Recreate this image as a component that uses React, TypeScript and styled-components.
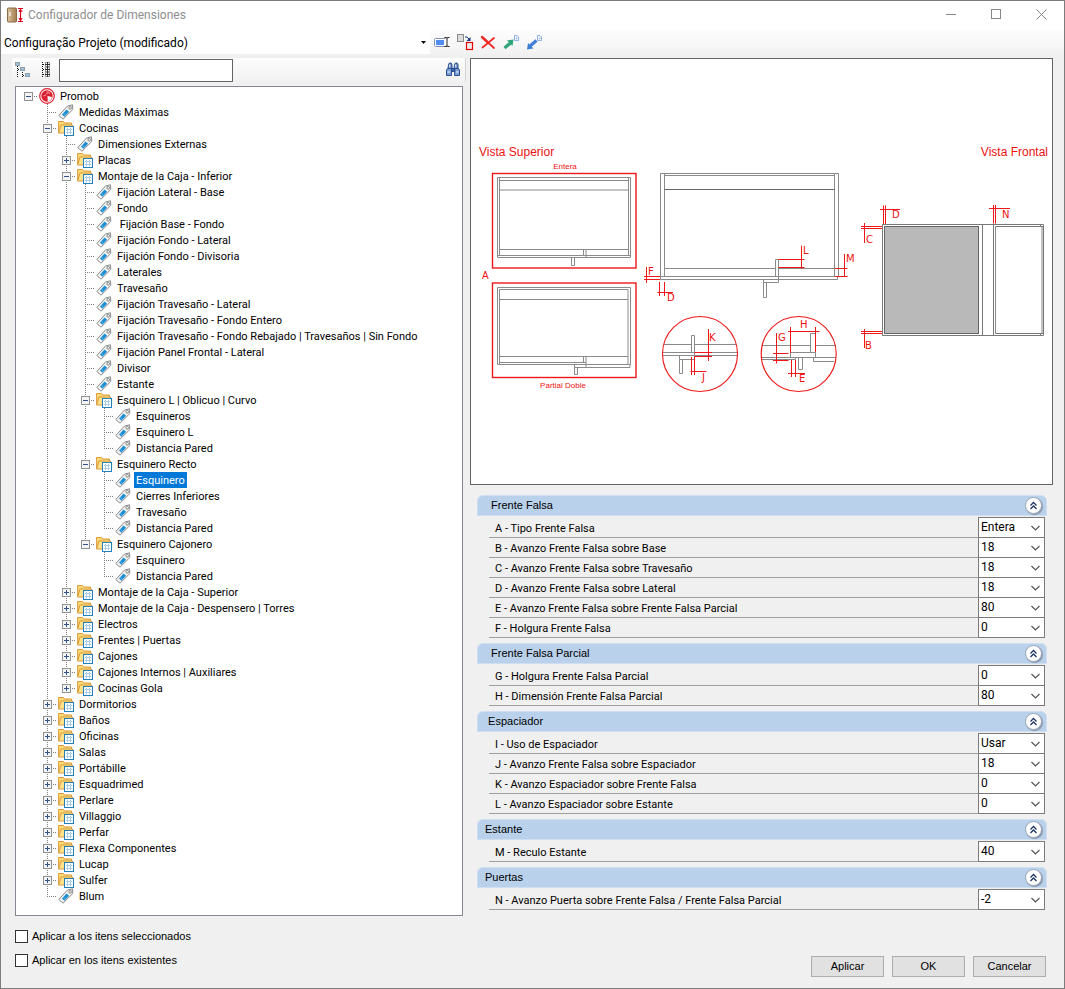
import React, { useState } from 'react';
import styled, { createGlobalStyle } from 'styled-components';

const GlobalStyle = createGlobalStyle`
  * { box-sizing: border-box; }
  body {
    margin: 0;
    background: #f0f0f0;
    color: #000;
    font-family: "Liberation Sans", Arial, sans-serif;
    font-size: 11px;
  }
  button, input, select { font: inherit; color: inherit; }
`;

const compactFont = 'Roboto, "Liberation Sans", Arial, sans-serif';

const Window = styled.main`
  display: flex;
  flex-direction: column;
  min-height: 100vh;
  border: 1px solid #7c7c7c;
  background: #f0f0f0;
`;

const TitleBar = styled.header`
  display: flex;
  align-items: center;
  height: 29px;
  padding: 0 0 2px 5px;
  background: #fff;
`;

const Title = styled.h1`
  flex: 1;
  margin: 0 0 0 4px;
  font-family: ${compactFont};
  font-size: 12px;
  font-weight: 400;
  line-height: 16px;
  color: #8e8e8e;
`;

const CaptionButton = styled.button`
  display: flex;
  align-items: center;
  justify-content: center;
  width: 45px;
  height: 27px;
  padding: 0;
  border: 0;
  background: transparent;
`;

const ProjectBar = styled.div`
  display: flex;
  height: 24px;
  background: linear-gradient(#fdfdfd, #f2f2f2);
`;

const ProjectPicker = styled.div`
  display: grid;
  width: 429px;
  background: #fff;
`;

const ProjectSelect = styled.select`
  grid-area: 1 / 1;
  appearance: none;
  padding: 2px 16px 0 3px;
  border: 0;
  background: transparent;
  font-family: ${compactFont};
  font-size: 12px;
`;

const ProjectArrow = styled.svg`
  grid-area: 1 / 1;
  place-self: center end;
  margin-right: 4px;
  pointer-events: none;
`;

const ToolGroup = styled.div`
  display: flex;
  align-items: center;
  gap: 5px;
  padding-left: 3px;
`;

const ToolButton = styled.button`
  display: flex;
  align-items: center;
  justify-content: center;
  width: 18px;
  height: 18px;
  padding: 0;
  border: 0;
  background: transparent;
`;

const Body = styled.div`
  display: flex;
  flex: 1;
  gap: 4px;
  padding: 4px 11px 11px;
`;

const LeftColumn = styled.section`
  display: flex;
  flex-direction: column;
  flex: 0 0 454px;
`;

const RightColumn = styled.section`
  display: flex;
  flex-direction: column;
  flex: 1;
  min-width: 0;
`;

const SearchBar = styled.div`
  display: flex;
  align-items: center;
  gap: 5px;
  height: 24px;
  padding: 0 3px 0 1px;
  border-right: 1px solid #d4d4d4;
  border-radius: 2px;
  background: linear-gradient(#fdfdfd, #f1f1f1);
`;

const SearchInput = styled.input`
  width: 174px;
  height: 23px;
  margin-right: auto;
  padding: 0 4px;
  border: 1px solid #646464;
  background: #fff;
`;

const TreePanel = styled.nav`
  flex: 1;
  margin: 4px 3px 0;
  padding: 1px 0 10px 3px;
  border: 1px solid #828790;
  background: #fff;
`;

const Branch = styled.ul<{ $nested?: boolean }>`
  margin: 0;
  padding: 0 0 0 ${p => (p.$nested ? 19 : 0)}px;
  list-style: none;
`;

const Node = styled.li<{ $guide: 'none' | 'half' | 'full' }>`
  background-image: ${p =>
    p.$guide === 'none' ? 'none' : 'repeating-linear-gradient(#808080 0 1px, transparent 1px 2px)'};
  background-repeat: no-repeat;
  background-size: 1px ${p => (p.$guide === 'half' ? '8px' : '100%')};
  background-position: 9px 0;
`;

const NodeRow = styled.div`
  display: flex;
  align-items: center;
  height: 16px;
`;

const Joint = styled.div`
  display: flex;
  align-items: center;
  width: 20px;
  height: 16px;
  padding-left: 5px;
  background: repeating-linear-gradient(90deg, #808080 0 1px, transparent 1px 2px) 9px 8px / 10px 1px no-repeat;
`;

const Expander = styled.button`
  display: flex;
  width: 9px;
  height: 9px;
  padding: 0;
  border: 0;
  background: #fff;
`;

const NodeLabel = styled.span<{ $selected?: boolean }>`
  margin-left: 3px;
  padding: 2px 2px 0;
  font-family: ${compactFont};
  line-height: 14px;
  white-space: pre;
  color: ${p => (p.$selected ? '#fff' : '#000')};
  background: ${p => (p.$selected ? '#0078d7' : 'transparent')};
`;

const Options = styled.div`
  display: flex;
  flex-direction: column;
  gap: 8px;
  padding: 12px 3px 9px;
`;

const CheckLabel = styled.label`
  display: flex;
  align-items: center;
  gap: 4px;
  height: 16px;
`;

const CheckBox = styled.input`
  appearance: none;
  width: 13px;
  height: 13px;
  margin: 0;
  border: 1px solid #333;
  background: #fff;
  &:checked { background: #0078d7; box-shadow: inset 0 0 0 2px #fff; }
`;

const Preview = styled.figure`
  margin: 0;
  border: 1px solid #646464;
  background: #fff;
`;

const Drawing = styled.svg`
  display: block;
  width: 100%;
  height: auto;
`;

const Sections = styled.div`
  display: flex;
  flex-direction: column;
  gap: 6px;
  padding: 10px 6px 0 7px;
`;

const SectionHeader = styled.header`
  display: flex;
  align-items: center;
  justify-content: space-between;
  height: 21px;
  margin-bottom: 1px;
  padding: 0 4px 0 7px;
  border: 1px solid #cfdff1;
  border-radius: 6px 6px 0 0;
  background: #b9d1ea;
`;

const SectionTitle = styled.h2`
  margin: 0;
  padding-bottom: 2px;
  font-size: 11px;
  font-weight: 400;
  line-height: 16px;
  white-space: pre;
`;

const CollapseButton = styled.button`
  display: flex;
  align-items: center;
  justify-content: center;
  width: 17px;
  height: 17px;
  padding: 0;
  border: 1px solid #9aa5b8;
  border-radius: 50%;
  background: #fff;
  box-shadow: 1px 1px 1px #8593aa;
`;

const PropertyRow = styled.div`
  display: flex;
  height: 20px;
  margin: 0 2px 0 12px;
`;

const PropertyLabel = styled.label`
  flex: 1;
  height: 21px;
  padding: 3px 0 0 6px;
  border-bottom: 1px solid #a0a0a0;
  font-family: ${compactFont};
  line-height: 17px;
`;

const ValuePicker = styled.div`
  display: grid;
  width: 67px;
  height: 21px;
`;

const ValueSelect = styled.select`
  grid-area: 1 / 1;
  appearance: none;
  min-width: 0;
  padding: 0 18px 2px 2px;
  border: 1px solid #7a7a7a;
  border-radius: 0;
  background: #fff;
  font-family: ${compactFont};
  font-size: 12px;
`;

const ValueArrow = styled.svg`
  grid-area: 1 / 1;
  place-self: center end;
  margin-right: 5px;
  pointer-events: none;
`;

const Footer = styled.footer`
  display: flex;
  justify-content: flex-end;
  gap: 8px;
  margin-top: auto;
  padding: 16px 7px 0 0;
`;

const PushButton = styled.button`
  width: 73px;
  height: 21px;
  padding: 0 0 2px;
  border: 1px solid #adadad;
  background: #e1e1e1;
`;

const DoorIcon = () => (
  <svg width="18" height="18" viewBox="0 0 18 18" aria-hidden="true">
    <defs>
      <linearGradient id="wood" x1="0" y1="0" x2="1" y2="0">
        <stop offset="0" stopColor="#dcc3a0" />
        <stop offset="1" stopColor="#a57b4d" />
      </linearGradient>
    </defs>
    <rect x="1.5" y="2" width="9" height="14" rx="1" fill="url(#wood)" stroke="#8c6a45" />
    <path d="M4 6v4" stroke="#f2f2f2" strokeWidth="1.4" />
    <path d="M12 2.5h5M12 15.5h5M14.5 4v10" stroke="#d9001b" strokeWidth="1.2" />
    <path d="M14.5 2.5l2.2 3.2h-4.4zM14.5 15.5l2.2-3.2h-4.4z" fill="#d9001b" />
  </svg>
);

const RenameIcon = () => (
  <svg width="18" height="18" viewBox="0 0 18 18" aria-hidden="true">
    <rect x="1.5" y="5.5" width="12" height="8" rx="1" fill="#fff" stroke="#7e93b5" />
    <rect x="3" y="7" width="8" height="5" fill="#4f8df0" />
    <path d="M14 5v8" stroke="#fff" strokeWidth="3" />
    <path d="M11.5 4.5h1.5l1 .5 1-.5h1.5M11.5 13.5h1.5l1-.5 1 .5h1.5M14 5v8" fill="none" stroke="#222" />
  </svg>
);

const ReplaceIcon = () => (
  <svg width="18" height="18" viewBox="0 0 18 18" aria-hidden="true">
    <rect x="1.5" y="1.5" width="6" height="7" fill="#ddd" stroke="#8a8a8a" />
    <rect x="10.5" y="9.5" width="6" height="7" fill="#eee" stroke="#e60000" strokeWidth="1.2" />
    <path d="M9 4h2l2 2" fill="none" stroke="#16377f" />
    <path d="M14.5 4v4h-4z" fill="#16377f" />
  </svg>
);

const DeleteIcon = () => (
  <svg width="18" height="18" viewBox="0 0 18 18" aria-hidden="true">
    <path d="M3 4l12 11M15 5L3.5 14.5" stroke="#ee2b2b" strokeWidth="1.8" strokeLinecap="round" />
    <path d="M3 4l6 5.5" stroke="#ee2b2b" strokeWidth="2.4" strokeLinecap="round" />
  </svg>
);

const SheetMark = () => (
  <path d="M12.5 2.5h2.5l1.5 1.5v3.5h-4zM14 5.5h1.5" fill="#edf4fd" stroke="#8fb2e2" />
);

const ExportIcon = () => (
  <svg width="18" height="18" viewBox="0 0 18 18" aria-hidden="true">
    <path d="M2.5 15L9 9.5" stroke="#30a57c" strokeWidth="3.2" />
    <path d="M5 7.5l6.5-1-1 6.5z" fill="#30a57c" />
    <SheetMark />
  </svg>
);

const ImportIcon = () => (
  <svg width="18" height="18" viewBox="0 0 18 18" aria-hidden="true">
    <path d="M5 13L11.5 7.5" stroke="#3d7fd6" strokeWidth="3.2" />
    <path d="M2 16.5l1-6.5 5.5 5.5z" fill="#3d7fd6" />
    <SheetMark />
  </svg>
);

const CollapseTreeIcon = () => (
  <svg width="18" height="18" viewBox="0 0 18 18" aria-hidden="true">
    <path d="M4.5 5v12M5 8.5h3M9.5 11v6M10 14.5h4" fill="none" stroke="#111" strokeDasharray="1 1" />
    <g fill="#fff" stroke="#8b9fae">
      <rect x="2.5" y="1.5" width="4" height="3" />
      <rect x="7.5" y="6.5" width="4" height="3" />
      <rect x="12.5" y="12.5" width="4" height="3" />
    </g>
    <path d="M3 3h3M8 8h3M13 14h3" stroke="#4a7fa5" />
  </svg>
);

const ExpandTreeIcon = () => (
  <svg width="18" height="18" viewBox="0 0 18 18" aria-hidden="true">
    <path d="M6.5 1v16M7 3.5h3M7 8.5h3M7 13.5h3" fill="none" stroke="#111" strokeDasharray="1 1" />
    <g fill="#fff" stroke="#9a9a9a">
      <rect x="9.5" y="1.5" width="4" height="4" />
      <rect x="9.5" y="6.5" width="4" height="4" />
      <rect x="9.5" y="11.5" width="4" height="4" />
    </g>
    <path d="M9 3.5h5M9 8.5h5M9 13.5h5M11.5 1v15" stroke="#333" />
  </svg>
);

const BinocularsIcon = () => (
  <svg width="18" height="18" viewBox="0 0 18 18" aria-hidden="true">
    <g stroke="#2b4f8c">
      <path d="M4.5 3.5l1-1.5h1.5l1 1.5v4.5h-4zM10.5 3.5l1-1.5h1.5l1 1.5v4.5h-4z" fill="#5577b5" />
      <path d="M2.5 9l1-1.5h4v7h-5zM11 7.5h3.5l1 1.5v5.5h-5z" fill="#7da0d6" />
      <path d="M7.5 7.5h3v3h-3z" fill="#3a62a8" />
    </g>
    <path d="M3.5 11h2.500M12 11h2.500M5.800 3.500v3M11.800 3.500v3" stroke="#eef4fc" strokeWidth="1.2" />
  </svg>
);

const BrandIcon = () => (
  <svg width="16" height="16" viewBox="0 0 16 16" aria-hidden="true">
    <circle cx="8" cy="8" r="7.3" fill="#fff" stroke="#dc1f2e" strokeWidth="1.2" />
    <circle cx="8" cy="8" r="5.7" fill="#dc1f2e" />
    <path d="M8.5 8L13 9c-.6 2.600-2 4-4.200 4.500z" fill="#fff" />
    <path d="M9.5 3.5l1 2.5M4.5 8l2.5-1M8.3 3.500l-.5 3" stroke="#fff" strokeWidth=".6" />
  </svg>
);

const TagIcon = () => (
  <svg width="16" height="16" viewBox="0 0 16 16" aria-hidden="true">
    <path d="M.8 11.500L9.500 2l5-1.200.3 4.700L5 15.200z" fill="#f0f0f0" stroke="#8b8b8b" strokeLinejoin="round" />
    <path d="M4 10.500l4.600-5 2.500 2.300-4.700 5z" fill="#1c8fd4" />
    <path d="M5.500 9.500l2 1.800" stroke="#7cc4ec" strokeWidth=".8" />
    <circle cx="12.200" cy="3.800" r="1.300" fill="#fff" stroke="#777" strokeWidth=".9" />
  </svg>
);

const FolderIcon = () => (
  <svg width="16" height="16" viewBox="0 0 16 16" aria-hidden="true">
    <path d="M.6 13V1.500h4.800L6.500 3h7v3" fill="#fbd873" stroke="#d99a3c" strokeLinejoin="round" />
    <path d="M.6 13L3 5h11.500v8z" fill="#fde08a" stroke="#d99a3c" strokeLinejoin="round" />
    <rect x="6.500" y="6.500" width="9" height="9" fill="#fff" stroke="#1f7fb8" />
    <path d="M9.500 8v6M12.500 8v6M8 9.500h6M8 12.500h6" stroke="#a9cdea" />
  </svg>
);

const ExpanderMark = ({ open }: { open: boolean }) => (
  <svg width="9" height="9" viewBox="0 0 9 9" aria-hidden="true">
    <rect x=".5" y=".5" width="8" height="8" fill="#f4f4f4" stroke="#919191" />
    <path d={open ? 'M2 4.500h5' : 'M2 4.500h5M4.500 2v5'} stroke="#31528f" />
  </svg>
);

type TreeNode = { name: string; open?: boolean; folder?: boolean; brand?: boolean; selected?: boolean; children?: TreeNode[] };

const tags = (...names: string[]): TreeNode[] => names.map(name => ({ name }));
const folders = (...names: string[]): TreeNode[] => names.map(name => ({ name, folder: true }));

const tree: TreeNode[] = [
  {
    name: 'Promob', brand: true, open: true,
    children: [
      { name: 'Medidas Máximas' },
      {
        name: 'Cocinas', folder: true, open: true,
        children: [
          { name: 'Dimensiones Externas' },
          { name: 'Placas', folder: true },
          {
            name: 'Montaje de la Caja - Inferior', folder: true, open: true,
            children: [
              ...tags(
                'Fijación Lateral - Base', 'Fondo', ' Fijación Base - Fondo', 'Fijación Fondo - Lateral',
                'Fijación Fondo - Divisoria', 'Laterales', 'Travesaño', 'Fijación Travesaño - Lateral',
                'Fijación Travesaño - Fondo Entero',
                'Fijación Travesaño - Fondo Rebajado | Travesaños | Sin Fondo',
                'Fijación Panel Frontal - Lateral', 'Divisor', 'Estante',
              ),
              { name: 'Esquinero L | Oblicuo | Curvo', folder: true, open: true, children: tags('Esquineros', 'Esquinero L', 'Distancia Pared') },
              {
                name: 'Esquinero Recto', folder: true, open: true,
                children: [{ name: 'Esquinero', selected: true }, ...tags('Cierres Inferiores', 'Travesaño', 'Distancia Pared')],
              },
              { name: 'Esquinero Cajonero', folder: true, open: true, children: tags('Esquinero', 'Distancia Pared') },
            ],
          },
          ...folders(
            'Montaje de la Caja - Superior', 'Montaje de la Caja - Despensero | Torres', 'Electros',
            'Frentes | Puertas', 'Cajones', 'Cajones Internos | Auxiliares', 'Cocinas Gola',
          ),
        ],
      },
      ...folders(
        'Dormitorios', 'Baños', 'Oficinas', 'Salas', 'Portábille', 'Esquadrimed', 'Perlare',
        'Villaggio', 'Perfar', 'Flexa Componentes', 'Lucap', 'Sulfer',
      ),
      { name: 'Blum' },
    ],
  },
];

function TreeItem({ node, last, root }: { node: TreeNode; last: boolean; root?: boolean }) {
  const [open, setOpen] = useState(!!node.open);
  const expandable = node.brand || node.folder;
  return (
    <Node $guide={root ? 'none' : last ? 'half' : 'full'}>
      <NodeRow>
        <Joint>
          {expandable && (
            <Expander type="button" aria-label={node.name.trim()} aria-expanded={open} onClick={() => setOpen(!open)}>
              <ExpanderMark open={open} />
            </Expander>
          )}
        </Joint>
        {node.brand ? <BrandIcon /> : node.folder ? <FolderIcon /> : <TagIcon />}
        <NodeLabel $selected={node.selected}>{node.name}</NodeLabel>
      </NodeRow>
      {open && node.children && (
        <Branch $nested>
          {node.children.map((child, i) => (
            <TreeItem key={i} node={child} last={i === node.children!.length - 1} />
          ))}
        </Branch>
      )}
    </Node>
  );
}

const sections: { title: string; rows: [string, string][] }[] = [
  {
    title: '  Frente Falsa',
    rows: [
      ['A - Tipo Frente Falsa', 'Entera'],
      ['B - Avanzo Frente Falsa sobre Base', '18'],
      ['C - Avanzo Frente Falsa sobre Travesaño', '18'],
      ['D - Avanzo Frente Falsa sobre Lateral', '18'],
      ['E - Avanzo Frente Falsa sobre Frente Falsa Parcial', '80'],
      ['F - Holgura Frente Falsa', '0'],
    ],
  },
  {
    title: '  Frente Falsa Parcial',
    rows: [['G - Holgura Frente Falsa Parcial', '0'], ['H - Dimensión Frente Falsa Parcial', '80']],
  },
  {
    title: ' Espaciador',
    rows: [
      ['I - Uso de Espaciador', 'Usar'],
      ['J - Avanzo Frente Falsa sobre Espaciador', '18'],
      ['K - Avanzo Espaciador sobre Frente Falsa', '0'],
      ['L - Avanzo Espaciador sobre Estante', '0'],
    ],
  },
  { title: 'Estante', rows: [['M - Reculo Estante', '40']] },
  { title: 'Puertas', rows: [['N - Avanzo Puerta sobre Frente Falsa / Frente Falsa Parcial', '-2']] },
];

const cotas: [string, number, number][] = [
  ['L', 803, 254], ['M', 846, 262], ['F', 648, 275], ['D', 667, 301], ['K', 709, 341], ['J', 702, 381],
  ['G', 778, 341], ['H', 800, 328], ['E', 799, 382], ['D', 892, 218], ['N', 1002, 218], ['C', 866, 243], ['B', 865, 349],
];

const CabinetDrawing = () => (
  <Drawing viewBox="471 59 581 425" role="img" aria-label="Vista Superior / Vista Frontal">
    <g fill="none" stroke="#8a8a8a">
      <path d="M497.500 177.500H630.500V257.500H497.500zM499.500 177.500V255.500M628.500 177.500V255.500M499.500 180.500H628.500M499.500 190H628.500M499.500 249.500H628.500M497.500 255.500H630.500M583.500 249.500V255.500M586 249.500V257.500M571.500 257.500V265.500H574.500V257.500" />
      <path d="M497.500 364.500V287.500H630.500V364.500M499.500 289.500V364.500M628 289.500V364.500M499.500 289.500H628M499.500 299.500H628M499.500 356.500H628M499.500 362.500H586M497.500 364.500H630.500M583.500 356.500V362.500M586 356.500V367.500M574.500 374.500V367.500H630V364.500M574.500 364.500V374.500H577.500V367.500" />
      <path d="M660.500 279.500V173.500H838.500V276.500M664.500 173.500V276.500M834.500 173.500V276.500M664.500 175.500H834.500M664.500 268.500H775.500M778.500 268.500H834.500M660.500 276.500H838.500M660.500 279.500H837.500V276.500M775.500 276.500V259.500H778.500V282.500H763.500V279.500M763.500 282.500V297.500H766.500V282.500" />
      <path d="M664.500 189.500H834.500" stroke="#666" />
      <path d="M664 344.500H691.500M694.500 344.500H736M662.500 352.500H737.500M662.500 355.500H737.500M691.500 352.500V335.500H694.500V359.500H679.500V355.500M679.500 359.500V373.500H682.500V359.500" />
      <path d="M762 345.500H810.500M815.500 345.500H835.500M810.500 352.500V333.500H815.500V357.500M790.500 352.500H815.500M790.500 352.500V357.500M761.500 357.500H836M761.500 359.500H795.500V357.500M813.500 357.500V361.500H834M798.500 357.500V369.500H802.500V357.500" />
      <path d="M882.500 224.500H1043.500V335.500H882.500zM982.500 224.500V335.500M993.500 224.500V335.500M884 226.500H979M884 333.500H979M995.500 226.500H1043.500M995.500 333.500H1043.500M1040.500 224.500V226.500M1040.500 333.500V335.500" stroke="#777" />
      <rect x="884.500" y="226.500" width="94" height="107" fill="#b9b9b9" stroke="#666" />
      <path d="M995.500 226.500V333.500M1042 226.500V333.500" stroke="#888" />
    </g>
    <g fill="none" stroke="#ee1818">
      <g strokeWidth="1.400">
        <rect x="492.500" y="173.500" width="143.500" height="94.500" />
        <rect x="492.500" y="283" width="143.500" height="94.500" />
      </g>
      <g strokeWidth="1.100">
        <circle cx="700" cy="354" r="37.500" />
        <circle cx="798.700" cy="354" r="37.500" />
      </g>
      <path d="M801.500 245.500V268.500M778.500 259.500H804.500M778.500 267.500H804.500" />
      <path d="M844.500 254V277M835 268.500H847.500M835 276.500H847.500" />
      <path d="M646.500 267V283M644 276.500H660M644 279.500H660" />
      <path d="M657.500 292.500H673M659.500 282V296M664.500 282V296" />
      <path d="M708.500 329V361M694.500 352.500H712M694.500 356.500H712" />
      <path d="M691.500 357V375M694.500 357V375M690.500 371.500H706.500" />
      <path d="M776.500 333V363.500M773 353.500H788.500M773 360.500H788.500" />
      <path d="M788 331.500H819.500M790.500 327V353M815.500 327V352" />
      <path d="M788 373.500H805M791.500 360V377M795.500 360V377" />
      <path d="M880 209.500H900M883.500 205.500V224M885.500 205.500V224" />
      <path d="M989 208.500H1010M993.500 205V223.500M995.500 205V223.500" />
      <path d="M864.500 223V243M861 226.500H882M861 228.500H882" />
      <path d="M864.500 329V348M861 331.500H882M861 333.500H882" />
    </g>
    <g fill="#ee1111" fontFamily="'Liberation Sans', Arial, sans-serif" fontSize="8">
      <text x="479" y="156" fontSize="12">Vista Superior</text>
      <text x="1048" y="156" fontSize="12" textAnchor="end">Vista Frontal</text>
      <text x="565" y="169" textAnchor="middle">Entera</text>
      <text x="563" y="388" textAnchor="middle">Partial Doble</text>
      <text x="482" y="279" fontSize="10">A</text>
    </g>
    <g fill="#ee1111" fontFamily="'DejaVu Sans', Verdana, sans-serif" fontSize="10">
      {cotas.map(([t, x, y], i) => <text key={i} x={x} y={y}>{t}</text>)}
    </g>
  </Drawing>
);

export default function App() {
  return (
    <>
      <GlobalStyle />
      <Window>
        <TitleBar>
          <DoorIcon />
          <Title>Configurador de Dimensiones</Title>
          <CaptionButton type="button" aria-label="Minimizar">
            <svg width="11" height="11" viewBox="0 0 11 11"><path d="M0 5.500h10" stroke="#888" /></svg>
          </CaptionButton>
          <CaptionButton type="button" aria-label="Maximizar">
            <svg width="11" height="11" viewBox="0 0 11 11"><rect x=".5" y=".5" width="9" height="9" fill="none" stroke="#888" /></svg>
          </CaptionButton>
          <CaptionButton type="button" aria-label="Cerrar">
            <svg width="11" height="11" viewBox="0 0 11 11"><path d="M.5.500l10 10M10.500.500l-10 10" stroke="#888" /></svg>
          </CaptionButton>
        </TitleBar>
        <ProjectBar>
          <ProjectPicker>
            <ProjectSelect aria-label="Configuração">
              <option>Configuração Projeto (modificado)</option>
            </ProjectSelect>
            <ProjectArrow width="5" height="3" viewBox="0 0 5 3"><path d="M0 0h5L2.500 3z" /></ProjectArrow>
          </ProjectPicker>
          <ToolGroup>
            <ToolButton type="button" aria-label="Renombrar"><RenameIcon /></ToolButton>
            <ToolButton type="button" aria-label="Reemplazar"><ReplaceIcon /></ToolButton>
            <ToolButton type="button" aria-label="Eliminar"><DeleteIcon /></ToolButton>
            <ToolButton type="button" aria-label="Exportar"><ExportIcon /></ToolButton>
            <ToolButton type="button" aria-label="Importar"><ImportIcon /></ToolButton>
          </ToolGroup>
        </ProjectBar>
        <Body>
          <LeftColumn>
            <SearchBar>
              <ToolButton type="button" aria-label="Contraer todo"><CollapseTreeIcon /></ToolButton>
              <ToolButton type="button" aria-label="Expandir todo"><ExpandTreeIcon /></ToolButton>
              <SearchInput type="text" aria-label="Buscar" />
              <ToolButton type="button" aria-label="Buscar"><BinocularsIcon /></ToolButton>
            </SearchBar>
            <TreePanel>
              <Branch>
                {tree.map(node => <TreeItem key={node.name} node={node} last root />)}
              </Branch>
            </TreePanel>
            <Options>
              <CheckLabel><CheckBox type="checkbox" />Aplicar a los itens seleccionados</CheckLabel>
              <CheckLabel><CheckBox type="checkbox" />Aplicar en los itens existentes</CheckLabel>
            </Options>
          </LeftColumn>
          <RightColumn>
            <Preview><CabinetDrawing /></Preview>
            <Sections>
              {sections.map(section => (
                <section key={section.title}>
                  <SectionHeader>
                    <SectionTitle>{section.title}</SectionTitle>
                    <CollapseButton type="button" aria-label={'Contraer ' + section.title.trim()}>
                      <svg width="9" height="9" viewBox="0 0 9 9">
                        <path d="M1.500 4.500l3-3 3 3M1.500 8l3-3 3 3" fill="none" stroke="#1f3566" strokeWidth="1.300" />
                      </svg>
                    </CollapseButton>
                  </SectionHeader>
                  {section.rows.map(([label, value]) => (
                    <PropertyRow key={label}>
                      <PropertyLabel htmlFor={'campo-' + label[0]}>{label}</PropertyLabel>
                      <ValuePicker>
                        <ValueSelect id={'campo-' + label[0]}>
                          <option>{value}</option>
                        </ValueSelect>
                        <ValueArrow width="9" height="6" viewBox="0 0 9 6">
                          <path d="M.5 1l4 4 4-4" fill="none" stroke="#555" strokeWidth="1.200" />
                        </ValueArrow>
                      </ValuePicker>
                    </PropertyRow>
                  ))}
                </section>
              ))}
            </Sections>
            <Footer>
              <PushButton type="button">Aplicar</PushButton>
              <PushButton type="button">OK</PushButton>
              <PushButton type="button">Cancelar</PushButton>
            </Footer>
          </RightColumn>
        </Body>
      </Window>
    </>
  );
}
